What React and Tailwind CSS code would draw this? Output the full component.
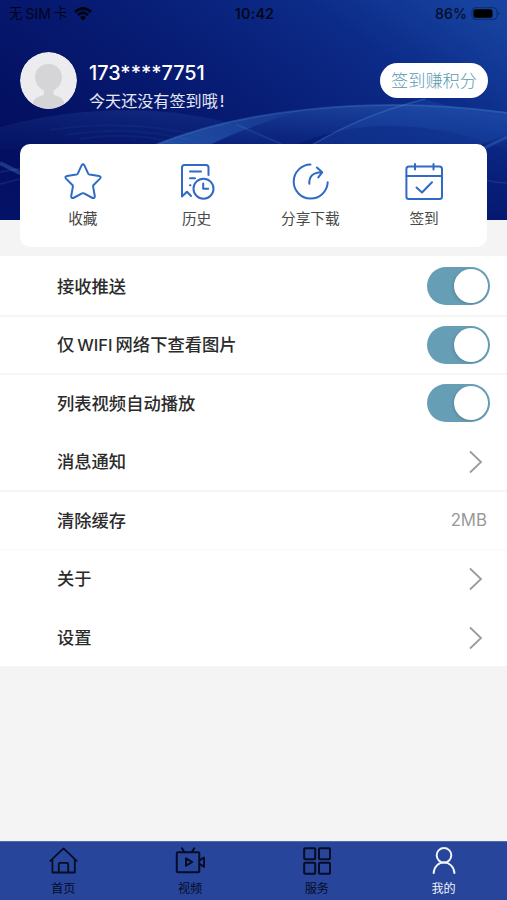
import React, { useState } from 'react';

const StarIcon = () => (
  <svg className="w-[38px] h-[38px]" viewBox="0 0 38 38" fill="none" stroke="#2f6bc6" strokeWidth="2" strokeLinejoin="round">
    <path d="M17.7 3.2Q19 1.2 20.3 3.2L24.2 11.6Q24.6 12.4 25.5 12.6L35 13.9Q37.6 14.6 36 16.6L29.6 23Q29 23.7 29.1 24.6L30.8 34Q30.9 36.6 28.6 36L20 31.4Q19 30.9 18 31.4L9.4 36Q7.1 36.6 7.2 34L8.9 24.6Q9 23.7 8.4 23L2 16.6Q.4 14.6 3 13.9L12.5 12.6Q13.4 12.4 13.8 11.6Z" />
  </svg>
);

const HistoryIcon = () => (
  <svg className="w-[38px] h-[38px]" viewBox="0 0 38 38" fill="none" stroke="#2f6bc6" strokeWidth="2" strokeLinecap="round" strokeLinejoin="round">
    <path d="M30.500 13V5.500Q30.500 3 28 3H6.500Q4 3 4 5.500V34.500L9 29.800L13 34" />
    <path d="M12 9.500H23M12 16.300H17M12 23.300H12.500" />
    <circle cx="25.500" cy="26.700" r="10" />
    <path d="M25.200 21.500V26.800H30.200" />
  </svg>
);

const ShareIcon = () => (
  <svg className="w-[38px] h-[38px]" viewBox="0 0 38 38" fill="none" stroke="#2f6bc6" strokeWidth="2" strokeLinecap="round" strokeLinejoin="round">
    <path d="M19.500 2.600A17 17 0 1 0 36.700 20.300" />
    <path d="M18.300 21.800Q17.800 10.600 30.500 10.300M25.900 5.500L31.200 10.300L27.300 15.400" />
  </svg>
);

const SignIcon = () => (
  <svg className="w-[38px] h-[38px]" viewBox="0 0 38 38" fill="none" stroke="#2f6bc6" strokeWidth="2" strokeLinecap="round" strokeLinejoin="round">
    <rect x="1.400" y="4.500" width="35.600" height="32.500" rx="2.500" />
    <path d="M1.400 14H37M10 2V7.500M28.500 2V7.500M11.500 25.500L17 30.500L27 20.300" />
  </svg>
);

const HomeIcon = () => (
  <svg className="w-[30px] h-[30px]" viewBox="0 0 30 30" fill="none" stroke="currentColor" strokeWidth="1.800" strokeLinecap="round" strokeLinejoin="round">
    <path d="M2.300 14.800L15.500 2.400L28.700 14.800M4.400 13.500V26.500H26.800V13.500M10.800 26.500V18.200Q10.800 16.800 12.200 16.800H18.800Q20.200 16.800 20.200 18.200V26.500" />
  </svg>
);

const VideoIcon = () => (
  <svg className="w-[30px] h-[30px]" viewBox="0 0 30 30" fill="none" stroke="currentColor" strokeWidth="2" strokeLinecap="round" strokeLinejoin="round">
    <rect x="1.800" y="6.200" width="22.500" height="20" rx="1.200" />
    <path d="M6.900 2.300L9.300 6M19.300 2.300L16.900 6M11 12.300V19.700L17.200 16Z" />
    <path d="M24.800 14.200L29 11.500V20.800L24.800 18.200" />
  </svg>
);

const ServiceIcon = () => (
  <svg className="w-[30px] h-[30px]" viewBox="0 0 30 30" fill="none" stroke="currentColor" strokeWidth="2">
    <rect x="2.200" y="2.300" width="11" height="11" rx="1" />
    <rect x="17" y="2.300" width="11" height="11" rx="1" />
    <rect x="2.200" y="16.700" width="11" height="11" rx="1" />
    <rect x="17" y="16.700" width="11" height="11" rx="1" />
  </svg>
);

const MineIcon = () => (
  <svg className="w-[30px] h-[30px]" viewBox="0 0 30 30" fill="none" stroke="currentColor" strokeWidth="2" strokeLinecap="round">
    <circle cx="15" cy="9.300" r="7.300" />
    <path d="M4.700 27C5 20.500 9.600 16.600 15 16.600S25 20.500 25.400 27" />
  </svg>
);

const HeaderBackground = () => (
  <svg className="absolute inset-0 w-full h-full" viewBox="0 0 507 220" preserveAspectRatio="none">
    <defs>
      <linearGradient id="base" x1="0" y1="0.700" x2="1" y2="0.100">
        <stop offset="0" stopColor="#030d5c" />
        <stop offset="0.450" stopColor="#071c74" />
        <stop offset="0.750" stopColor="#0c2b88" />
        <stop offset="1" stopColor="#1743a0" />
      </linearGradient>
      <linearGradient id="wave" x1="0" y1="0" x2="0" y2="1">
        <stop offset="0" stopColor="#3a74cc" stopOpacity="0.500" />
        <stop offset="1" stopColor="#0f3494" stopOpacity="0.250" />
      </linearGradient>
      <linearGradient id="shade" x1="0" y1="0" x2="0" y2="1">
        <stop offset="0" stopColor="#04146c" stopOpacity="0" />
        <stop offset="1" stopColor="#04146c" stopOpacity="0.700" />
      </linearGradient>
      <linearGradient id="beam" x1="0" y1="1" x2="1" y2="0">
        <stop offset="0" stopColor="#2e66bd" stopOpacity="0.700" />
        <stop offset="1" stopColor="#2e66bd" stopOpacity="0" />
      </linearGradient>
    </defs>
    <rect width="507" height="220" fill="url(#base)" />
    <rect y="125" width="507" height="95" fill="url(#shade)" />
    <path d="M0 127C70 108 160 102 240 126L290 150H0Z" fill="url(#wave)" opacity="0.350" />
    <path d="M155 145C240 111 370 94 507 112V150C430 118 350 118 290 148Z" fill="url(#wave)" opacity="0.750" />
    <path d="M155 145C200 127 250 114 310 108C270 120 240 130 205 147Z" fill="url(#beam)" />
    <path d="M312 146C345 127 375 113 425 99C460 110 490 114 507 116V136C485 142 465 150 450 158L430 146Z" fill="#1d4dac" opacity="0.350" />
    <g fill="none" stroke="#4c83d2">
      <path d="M155 145C240 111 370 94 507 113" strokeWidth="2" opacity="0.300" />
      <path d="M312 145C345 126 375 112 425 99" strokeWidth="1.500" opacity="0.400" />
      <path d="M236 124L290 148" strokeWidth="2" opacity="0.200" />
      <path d="M455 162L507 137" strokeWidth="3" opacity="0.300" />
      <path d="M485 180Q497 183 507 183" opacity="0.300" />
      <path d="M50 130Q130 118 205 137M65 135Q130 125 190 140M80 139Q130 131 175 143" strokeWidth="2" opacity="0.080" />
      <path d="M0 163L24 175" strokeWidth="4" opacity="0.350" />
      <path d="M0 172L24 168M0 184L24 178" strokeWidth="2" opacity="0.150" />
    </g>
  </svg>
);

const actions = [
  { label: '收藏', icon: StarIcon },
  { label: '历史', icon: HistoryIcon },
  { label: '分享下载', icon: ShareIcon },
  { label: '签到', icon: SignIcon },
];

const rows = [
  { id: 'push', label: '接收推送', type: 'switch', line: 'border-transparent' },
  { id: 'wifi', label: <>仅<span className="font-['Inter'] mx-[3px] text-[16.5px]">WIFI</span>网络下查看图片</>, type: 'switch', line: 'border-[#f5f5f5]' },
  { id: 'autoplay', label: '列表视频自动播放', type: 'switch', line: 'border-[#f5f5f5]' },
  { id: 'message', label: '消息通知', type: 'link', line: 'border-transparent' },
  { id: 'cache', label: '清除缓存', type: 'value', value: '2MB', line: 'border-[#f5f5f5]' },
  { id: 'about', label: '关于', type: 'link', line: 'border-[#fbfbfb]' },
  { id: 'settings', label: '设置', type: 'link', line: 'border-transparent' },
];

const tabs = [
  { label: '首页', icon: HomeIcon },
  { label: '视频', icon: VideoIcon },
  { label: '服务', icon: ServiceIcon },
  { label: '我的', icon: MineIcon },
];

const StatusBar = () => (
  <div className="h-[28px] grid grid-cols-3 items-center pl-[9px] pr-[7px] text-[14.5px] leading-none text-black/80">
    <div className="flex items-center">
      <span className="text-[13.5px]">无</span>
      <span className="ml-[3px] text-[14px]">SIM</span>
      <span className="ml-[3px] text-[13.5px]">卡</span>
      <svg className="ml-[7px] w-[18px] h-[14px]" viewBox="0 0 18 14" fill="none" stroke="#000411" strokeWidth="2.700">
        <path d="M1 5Q9 -2 17 5M3.900 8Q9 3.500 14.100 8" />
        <path d="M9 13.500L5.800 10.300Q9 7.800 12.200 10.300Z" fill="#000411" stroke="none" />
      </svg>
    </div>
    <div className="text-center font-semibold text-[14.3px] tracking-[0.2px]">10:42</div>
    <div className="flex items-center justify-end">
      <span className="font-medium text-[14.2px]">86%</span>
      <svg className="ml-[4px] w-[29px] h-[13px]" viewBox="0 0 29 13">
        <rect x="1" y="0.700" width="25" height="11.600" rx="3.500" fill="none" stroke="#000820" strokeOpacity="0.400" />
        <rect x="2.500" y="2.200" width="19" height="8.600" rx="2" fill="#000" />
        <path d="M27.300 4.500Q29 6.500 27.300 8.500Z" fill="#000820" fillOpacity="0.500" />
      </svg>
    </div>
  </div>
);

const Switch = ({ on, onClick }) => (
  <button
    role="switch"
    aria-checked={on}
    onClick={onClick}
    className={`-mr-[3px] w-[63px] h-[38px] p-[2px] rounded-full flex items-center ${on ? 'justify-end bg-[#669eb6]' : 'justify-start bg-gray-300'}`}
  >
    <span className="w-[34px] h-[34px] rounded-full bg-white shadow-[-1px_1px_3px_rgba(0,0,0,0.15)]"></span>
  </button>
);

const App = () => {
  const [switches, setSwitches] = useState({ push: true, wifi: true, autoplay: true });
  const [activeTab, setActiveTab] = useState('我的');

  const toggle = (id) => setSwitches({ ...switches, [id]: !switches[id] });

  return (
    <div className="w-full h-[900px] flex flex-col overflow-hidden bg-[#f4f4f4] font-['Inter','Noto_Sans_CJK_SC',sans-serif]">
      {/* Header */}
      <header className="relative h-[220px] shrink-0">
        <HeaderBackground />
        <div className="relative">
          <StatusBar />
          <div className="mt-[24px] h-[57px] pl-[20px] pr-[19px] flex items-center">
            <svg className="w-[57px] h-[57px] shrink-0 rounded-full" viewBox="0 0 57 57">
              <circle cx="28.500" cy="28.500" r="28.500" fill="#ececee" />
              <path d="M28.500 12C20.500 12 15 18 15 25C15 30.500 18 36 24 38.500V41.500Q24 43 20.500 44Q13 46 12.500 52Q20 57 28.500 57T44.500 52Q44 46 36.500 44Q33.500 43 33.500 41.500V38.500C39 36 42 30.500 42 25C42 18 36.500 12 28.500 12Z" fill="#d5d5d7" />
            </svg>
            <div className="ml-[12px] flex-1 pt-[11px] text-white">
              <div className="text-[19.8px] leading-[26px] font-medium whitespace-nowrap">173****7751</div>
              <div className="mt-[3px] text-[16.1px] leading-[24px] text-white/90 whitespace-nowrap">今天还没有签到哦<span className="ml-[2px]">!</span></div>
            </div>
            <button className="w-[108px] h-[35px] rounded-full bg-white text-[17.2px] font-light text-[#5a9bb3] leading-none whitespace-nowrap">
              签到赚积分
            </button>
          </div>
        </div>
      </header>

      {/* Quick actions */}
      <div className="relative -mt-[76px] mx-[20px] h-[103px] shrink-0 px-[6px] pt-[18px] rounded-[10px] bg-white grid grid-cols-4">
        {actions.map(({ label, icon: Icon }) => (
          <button key={label} className="flex flex-col items-center justify-start">
            <Icon />
            <span className="mt-[9px] text-[14.7px] leading-[20px] text-[#484848]">{label}</span>
          </button>
        ))}
      </div>

      {/* Settings list */}
      <div className="mt-[9px] h-[410px] shrink-0 grid grid-rows-7 bg-white">
        {rows.map((row) => (
          <div key={row.id} className={`flex items-center justify-between pl-[57px] pr-[20px] border-t-2 ${row.line}`}>
            <span className="flex items-center text-[17.3px] leading-none font-medium text-[#2b2b2b]">{row.label}</span>
            {row.type === 'switch' && <Switch on={switches[row.id]} onClick={() => toggle(row.id)} />}
            {row.type === 'value' && <span className="text-[16.8px] text-[#999]">{row.value}</span>}
            {row.type === 'link' && (
              <svg className="mr-[4px] w-[15px] h-[24px]" viewBox="0 0 15 24" fill="none" stroke="#9b9b9b" strokeWidth="1.800">
                <path d="M2 1.500L13 12L2 22.500" />
              </svg>
            )}
          </div>
        ))}
      </div>

      {/* Tab bar */}
      <nav className="mt-auto h-[59px] shrink-0 grid grid-cols-4 bg-[#26459b] border-t border-[#5269ad]">
        {tabs.map(({ label, icon: Icon }) => (
          <button
            key={label}
            onClick={() => setActiveTab(label)}
            className={`flex flex-col items-center justify-start pt-[4px] ${activeTab === label ? 'text-[#f1f4fb]' : 'text-[#060c25]'}`}
          >
            <Icon />
            <span className="mt-[5px] text-[12.1px] leading-[16px]">{label}</span>
          </button>
        ))}
      </nav>
    </div>
  );
};

export default App;
